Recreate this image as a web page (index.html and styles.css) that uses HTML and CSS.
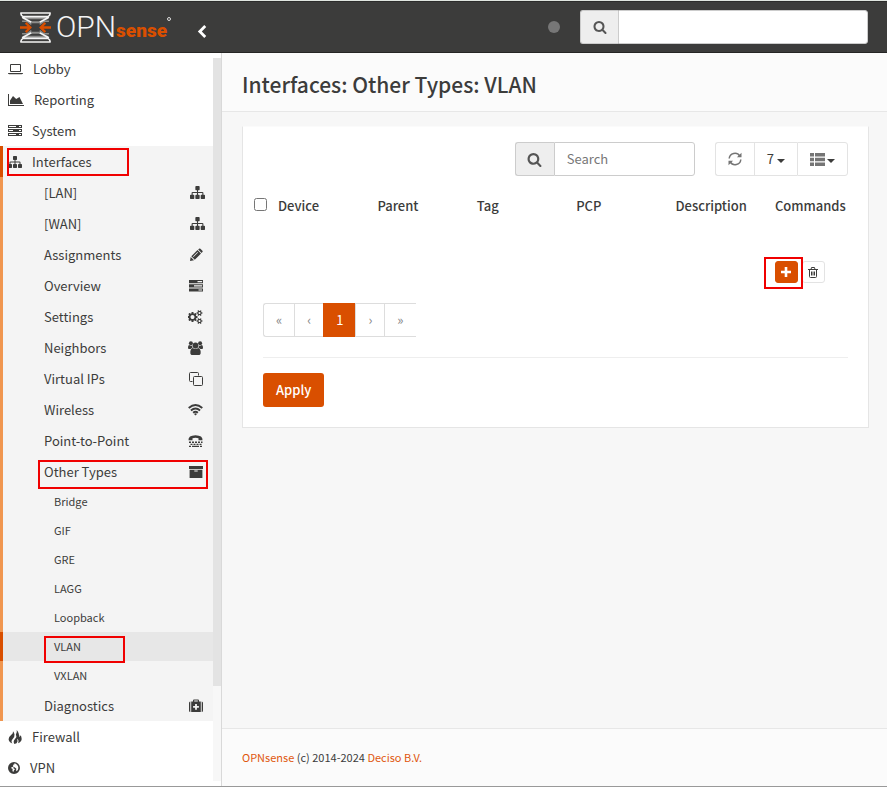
FILE: index.html
```html
<!DOCTYPE html>
<html lang="en">
<head>
<meta charset="utf-8">
<meta name="viewport" content="width=device-width, initial-scale=1">
<title>VLAN | Other Types | Interfaces</title>
<link rel="stylesheet" href="styles.css">
</head>
<body>
<svg class="defs" aria-hidden="true">
  <symbol id="i-sitemap" viewBox="0 0 1792 1792"><path d="M1792 1248v320q0 40-28 68t-68 28h-320q-40 0-68-28t-28-68v-320q0-40 28-68t68-28h96v-192h-512v192h96q40 0 68 28t28 68v320q0 40-28 68t-68 28h-320q-40 0-68-28t-28-68v-320q0-40 28-68t68-28h96v-192h-512v192h96q40 0 68 28t28 68v320q0 40-28 68t-68 28h-320q-40 0-68-28t-28-68v-320q0-40 28-68t68-28h96v-192q0-52 38-90t90-38h512v-192h-96q-40 0-68-28t-28-68v-320q0-40 28-68t68-28h320q40 0 68 28t28 68v320q0 40-28 68t-68 28h-96v192h512q52 0 90 38t38 90v192h96q40 0 68 28t28 68z"/></symbol>
  <symbol id="i-search" viewBox="0 0 1792 1792"><path d="M1216 832q0-185-131.5-316.5t-316.5-131.5-316.5 131.5-131.5 316.5 131.5 316.5 316.5 131.5 316.5-131.5 131.5-316.5zm512 832q0 52-38 90t-90 38q-54 0-90-38l-343-342q-179 124-399 124-143 0-273.5-55.5t-225-150-150-225-55.5-273.5 55.5-273.5 150-225 225-150 273.5-55.5 273.5 55.5 225 150 150 225 55.5 273.5q0 220-124 399l343 343q37 37 37 90z"/></symbol>
  <symbol id="i-pencil" viewBox="0 0 14 14"><path fill-rule="evenodd" d="M1 13l.7-4L5 12.300zM2.300 8.300l6.200-6.200 3.500 3.500-6.200 6.200zM4 8.500l.5.5 4.500-4.500-.5-.5zM9.200 1.500l.8-.8q.7-.6 1.400 0l2 2q.6.7 0 1.400l-.8.8z"/></symbol>
  <symbol id="i-archive" viewBox="0 0 14 14"><path fill-rule="evenodd" d="M0 1h14v3H0zM.6 4.800h12.800V13H.6zM5.300 5.600v1h3.400v-1z"/></symbol>
  <symbol id="i-cogs" viewBox="0 0 1920 1792"><path d="M832 896q0-106-75-181t-181-75-181 75-75 181 75 181 181 75 181-75 75-181zm768 512q0-52-38-90t-90-38-90 38-38 90q0 53 37.500 90.500t90.500 37.500 90.500-37.500 37.500-90.500zm0-1024q0-52-38-90t-90-38-90 38-38 90q0 53 37.500 90.500t90.500 37.500 90.500-37.500 37.500-90.500zm-384 421v185q0 10-7 19.500t-16 10.500l-155 24q-11 35-32 76 34 48 90 115 7 11 7 20 0 12-7 19-23 30-82.500 89.500t-78.500 59.500q-11 0-21-7l-115-90q-37 19-77 31-11 108-23 155-7 24-30 24h-186q-11 0-20-7.500t-10-17.500l-23-153q-34-10-75-31l-118 89q-7 7-20 7-11 0-21-8-144-133-144-160 0-9 7-19 10-14 41-53t47-61q-23-44-35-82l-152-24q-10-1-17-9.500t-7-19.500v-185q0-10 7-19.500t16-10.500l155-24q11-35 32-76-34-48-90-115-7-11-7-20 0-12 7-20 22-30 82-89t79-59q11 0 21 7l115 90q34-18 77-32 11-108 23-154 7-24 30-24h186q11 0 20 7.500t10 17.500l23 153q34 10 75 31l118-89q8-7 20-7 11 0 21 8 144 133 144 160 0 8-7 19-12 16-42 54t-45 60q23 48 34 82l152 23q10 2 17 10.500t7 19.500zm640 533v140q0 16-149 31-12 27-30 52 51 113 51 138 0 4-4 7-122 71-124 71-8 0-46-47t-52-68q-20 2-30 2t-30-2q-14 21-52 68t-46 47q-2 0-124-71-4-3-4-7 0-25 51-138-18-25-30-52-149-15-149-31v-140q0-16 149-31 13-29 30-52-51-113-51-138 0-4 4-7 4-2 35-20t59-34 30-16q8 0 46 46.500t52 67.500q20-2 30-2t30 2q51-71 92-112l6-2q4 0 124 70 4 3 4 7 0 25-51 138 17 23 30 52 149 15 149 31zm0-1024v140q0 16-149 31-12 27-30 52 51 113 51 138 0 4-4 7-122 71-124 71-8 0-46-47t-52-68q-20 2-30 2t-30-2q-14 21-52 68t-46 47q-2 0-124-71-4-3-4-7 0-25 51-138-18-25-30-52-149-15-149-31v-140q0-16 149-31 13-29 30-52-51-113-51-138 0-4 4-7 4-2 35-20t59-34 30-16q8 0 46 46.500t52 67.500q20-2 30-2t30 2q51-71 92-112l6-2q4 0 124 70 4 3 4 7 0 25-51 138 17 23 30 52 149 15 149 31z"/></symbol>
  <symbol id="i-laptop" viewBox="0 0 15 14"><path fill-rule="evenodd" d="M3 2h9q1 0 1 1v6q0 1-1 1H3q-1 0-1-1V3q0-1 1-1zM3 3v6h9V3zM0 11h15v.6q-.4.7-1.400.7H1.400Q.4 12.300 0 11.600z"/></symbol>
  <symbol id="i-area" viewBox="0 0 16 14"><path d="M0 1h1v11h15v1H0zM2 11V7.500L5 3l3.200 3L11.500 4l3.500 7z"/></symbol>
  <symbol id="i-server" viewBox="0 0 14 14"><path fill-rule="evenodd" d="M0 1h14v3H0zM0 5h14v3H0zM0 9h14v3H0zM1 2v1h7V2zM1 6v1h4V6zM1 10v1h7v-1zM11 2v1h2V2zM11 6v1h2V6zM11 10v1h2v-1z"/></symbol>
  <symbol id="i-tasks" viewBox="0 0 14 14"><path fill-rule="evenodd" d="M0 1h14v3.200H0zM0 5.200h14v3.200H0zM0 9.400h14v3.200H0zM8.500 2v1.200h4.600V2zM5 6.200v1.200h8.100V6.200zM9.500 10.400v1.200h3.600v-1.200z"/></symbol>
  <symbol id="i-users" viewBox="0 0 15 14"><circle cx="7.500" cy="4.500" r="2.900"/><circle cx="2.900" cy="2.300" r="2"/><circle cx="12.100" cy="2.300" r="2"/><path d="M3.500 14q-1.500-.4-1.200-3.200.4-3.400 2.400-3.800 2.800 1.700 5.600 0 2 .4 2.400 3.800.3 2.800-1.200 3.200zM.9 8.100Q0 8 0 6.500 0 4.200 1.200 4.100q1.500 1 3 .4-.2 1.300.4 2.300-1.400.3-2 1.300zM14.100 8.100q.9-.1.900-1.600 0-2.300-1.200-2.400-1.500 1-3 .4.200 1.300-.4 2.300 1.400.3 2 1.300z"/></symbol>
  <symbol id="i-clone" viewBox="0 0 14 14"><path fill="none" stroke="currentColor" d="M3.500 9.500h-2q-1 0-1-1v-7q0-1 1-1h7q1 0 1 1v2M5.500 4.500h7q1 0 1 1v7q0 1-1 1h-7q-1 0-1-1v-7q0-1 1-1z"/></symbol>
  <symbol id="i-wifi" viewBox="0 0 15 14"><path fill="none" stroke="currentColor" stroke-width="1.800" d="M.7 5q6.800-6 13.600 0M2.900 7.500q4.600-4 9.200 0M5.100 9.800q2.400-2.100 4.800 0"/><path d="M6 10.900q1.500-1.100 3 0l-1.500 1.600z"/></symbol>
  <symbol id="i-tty" viewBox="0 0 15 14"><path d="M.5 6.200Q0 1.400 7.500 1.200 15 1.400 14.500 6.200h-4V4.300q-3-1-6 0v1.900zM1 7.500h2V9H1zM4 7.500h2V9H4zM7 7.500h2V9H7zM10 7.500h2V9h-2zM13 7.500h1.500V9H13zM2.500 9.700h2V11h-2zM5.500 9.700h2V11h-2zM8.500 9.700h2V11h-2zM11.500 9.700h2V11h-2zM1 11.700h2V13H1zM4 11.700h7V13H4zM12 11.700h2V13h-2z"/></symbol>
  <symbol id="i-medkit" viewBox="0 0 14 14"><path fill-rule="evenodd" d="M1.300 2.500v10.500Q0 13 0 11.500V4q0-1.500 1.300-1.500zM12.700 2.500v10.500q1.300 0 1.300-1.500V4q0-1.500-1.300-1.500zM2.200 2.500H4V1.500q0-1 1-1h4q1 0 1 1v1h1.800V13H2.200zM5.200 1.600v.9h3.600v-.9zM6.100 5v2H4.100v1.800h2v2h1.800v-2h2V7h-2V5z"/></symbol>
  <symbol id="i-fire" viewBox="0 0 14 14"><path d="M5 1.200q.5 2-1.900 3.800Q.4 7.100.6 9.300.8 12.200 4.400 13.600 2.600 11 4.700 8.900q2.100-2.100 1.800-4.300Q6.200 2.600 5 1.200zM8.700 0q.7 2.600-.8 4.600 1.400 2.300-.9 4.500-2.300 2.400-.6 4.900 2.800-.2 3.100-2.600 0-1.500-.4-2.600 2.200 1.400 1 4.500 3.300-1.300 3.600-4.300.1-2.800-1.900-3.900.3 1.600-.8 2.100.4-4.500-2.300-7.200z"/></symbol>
  <symbol id="i-globe" viewBox="0 0 12 12"><path fill-rule="evenodd" d="M6 0a6 6 0 1 1 0 12A6 6 0 0 1 6 0zM7.300 1.400L6 1.600l.6.7-1 .3-.8 1 .8.300L4.600 5l-1.200.2-.3 1 1 .2.600 1-.3 1.500.9 1L6 8.300l.9-.9-.9-1-1-.5.6-.7 1.200.1.600.8.900.5-.2 1.700.6.900 1.200-1.400Q11.500 3.500 7.300 1.400z"/></symbol>
  <symbol id="i-refresh" viewBox="0 0 14 14"><path fill="none" stroke="currentColor" stroke-width="1.500" d="M1.200 6.500A5.700 5.700 0 0 1 11.800 4.100M12.800 7.500A5.700 5.700 0 0 1 2.200 9.900"/><path d="M13.500.7V5.300H8.900zM.5 13.300V8.700h4.600z"/></symbol>
  <symbol id="i-list" viewBox="0 0 15 13"><path d="M0 0h4v3.500H0zM5 0h10v3.500H5zM0 4.700h4v3.500H0zM5 4.700h10v3.500H5zM0 9.400h4v3.500H0zM5 9.400h10v3.500H5z"/></symbol>
  <symbol id="i-plus" viewBox="0 0 10 10"><path d="M3.700 0h2.600v3.700H10v2.600H6.300V10H3.700V6.300H0V3.700h3.700z"/></symbol>
  <symbol id="i-trash" viewBox="0 0 10 11"><path fill="none" stroke="currentColor" d="M0 2.500h10M3 2.500l.5-2h3l.5 2M1.500 2.500v7q0 1 1 1h5q1 0 1-1v-7M3.500 4.500v4M5 4.500v4M6.500 4.500v4"/></symbol>
  <symbol id="i-chevron" viewBox="0 0 9 12"><path fill="none" stroke="currentColor" stroke-width="2.600" d="M7.500 1L2.500 6l5 5"/></symbol>
</svg>

<header class="topbar">
  <a class="brand" href="#" aria-label="OPNsense">
    <svg class="brand-mark" viewBox="0 0 30 30">
      <path fill="#8d8d8b" d="M3 4.500h24V7H3zM3 23h24v2.500H3zM11 9h8v2h-8zM11 19h8v2h-8z"/>
      <path fill="none" stroke="#8d8d8b" stroke-width="1.500" d="M2 9h5l4 3M28 9h-5l-4 3M2 21h5l4-3M28 21h-5l-4-3"/>
      <path fill="none" stroke="#f4f4f4" stroke-width="1.600" d="M1 1h28q.5 2-2 3.500H3Q.5 3 1 1zM1 29h28q.5-2-2-3.500H3Q.5 27 1 29zM2 5l9 5M28 5l-9 5M2 25l9-5M28 25l-9-5"/>
      <path fill="none" stroke="#d94f00" stroke-width="2.200" d="M0 15h10M5.500 10.500L10 15l-4.500 4.500M30 15H20M24.500 10.500L20 15l4.500 4.500"/>
    </svg>
    <span class="brand-opn">OPN</span><span class="brand-sense">sense</span><span class="brand-dot"></span>
  </a>
  <button class="collapse" type="button" aria-label="Toggle sidebar"><svg width="10" height="13"><use href="#i-chevron"/></svg></button>
  <span class="status"></span>
  <form class="group top-search">
    <label class="addon" for="q"><svg width="14" height="14"><use href="#i-search"/></svg></label>
    <input id="q" type="text" aria-label="Quick search">
  </form>
</header>

<div class="page">
  <aside class="sidebar">
    <nav class="menu">
      <a class="item" href="#"><svg width="15" height="14"><use href="#i-laptop"/></svg>Lobby</a>
      <a class="item" href="#"><svg width="16" height="14"><use href="#i-area"/></svg>Reporting</a>
      <a class="item" href="#"><svg width="14" height="14"><use href="#i-server"/></svg>System</a>
      <a class="item open" href="#"><svg width="14" height="14"><use href="#i-sitemap"/></svg>Interfaces<span class="mark mark-main"></span></a>
      <div class="submenu">
        <a class="sub" href="#">[LAN]<svg class="wide" width="15" height="15"><use href="#i-sitemap"/></svg></a>
        <a class="sub" href="#">[WAN]<svg class="wide" width="15" height="15"><use href="#i-sitemap"/></svg></a>
        <a class="sub" href="#">Assignments<svg width="14" height="14"><use href="#i-pencil"/></svg></a>
        <a class="sub" href="#">Overview<svg width="14" height="14"><use href="#i-tasks"/></svg></a>
        <a class="sub" href="#">Settings<svg width="15" height="14"><use href="#i-cogs"/></svg></a>
        <a class="sub" href="#">Neighbors<svg width="15" height="14"><use href="#i-users"/></svg></a>
        <a class="sub" href="#">Virtual IPs<svg width="14" height="14"><use href="#i-clone"/></svg></a>
        <a class="sub" href="#">Wireless<svg width="15" height="14"><use href="#i-wifi"/></svg></a>
        <a class="sub" href="#">Point-to-Point<svg width="15" height="14"><use href="#i-tty"/></svg></a>
        <a class="sub" href="#">Other Types<svg width="14" height="14"><use href="#i-archive"/></svg><span class="mark mark-sub"></span></a>
        <a class="leaf" href="#">Bridge</a>
        <a class="leaf" href="#">GIF</a>
        <a class="leaf" href="#">GRE</a>
        <a class="leaf" href="#">LAGG</a>
        <a class="leaf" href="#">Loopback</a>
        <a class="leaf active" href="#">VLAN<span class="mark mark-leaf"></span></a>
        <a class="leaf" href="#">VXLAN</a>
        <a class="sub" href="#">Diagnostics<svg width="14" height="14"><use href="#i-medkit"/></svg></a>
      </div>
      <a class="item" href="#"><svg width="14" height="14"><use href="#i-fire"/></svg>Firewall</a>
      <a class="item" href="#"><svg width="12" height="12"><use href="#i-globe"/></svg>VPN</a>
    </nav>
    <div class="track"><div class="thumb"></div></div>
  </aside>

  <div class="content">
    <div class="title"><h1>Interfaces: Other Types: VLAN</h1></div>
    <main class="main">
      <section class="panel">
        <div class="toolbar">
          <div class="group table-search">
            <label class="addon" for="s"><svg width="15" height="15"><use href="#i-search"/></svg></label>
            <input id="s" type="text" placeholder="Search">
          </div>
          <div class="buttons">
            <button type="button" aria-label="Refresh"><svg width="14" height="14"><use href="#i-refresh"/></svg></button>
            <button type="button">7<span class="caret"></span></button>
            <button type="button" aria-label="Columns"><svg width="15" height="13"><use href="#i-list"/></svg><span class="caret"></span></button>
          </div>
        </div>
        <table>
          <colgroup><col class="c-check"><col class="c"><col class="c"><col class="c"><col class="c"><col class="c"><col></colgroup>
          <thead>
            <tr><th class="check"><input type="checkbox" aria-label="Select all"></th><th>Device</th><th>Parent</th><th>Tag</th><th>PCP</th><th>Description</th><th>Commands</th></tr>
          </thead>
          <tfoot>
            <tr><td colspan="6"></td><td><div class="commands">
              <button class="add" type="button" aria-label="Add"><svg width="10" height="10"><use href="#i-plus"/></svg></button>
              <button class="del" type="button" aria-label="Delete selected"><svg width="10" height="11"><use href="#i-trash"/></svg></button>
              <span class="mark mark-add"></span>
            </div></td></tr>
          </tfoot>
        </table>
        <div class="below">
          <div class="pages">
            <a href="#">«</a><a href="#">‹</a><a class="current" href="#">1</a><a href="#">›</a><a href="#">»</a>
          </div>
          <hr>
          <button class="apply" type="button">Apply</button>
        </div>
      </section>
    </main>
    <footer class="foot"><a href="#">OPNsense</a> (c) 2014-2024 <a href="#">Deciso B.V.</a></footer>
  </div>
</div>
</body>
</html>
```
FILE: styles.css
```css
* { box-sizing: border-box; }

body {
  margin: 0;
  min-height: 100vh;
  display: flex;
  flex-direction: column;
  border-top: 1px solid #e0e5e0;
  border-bottom: 1px solid #999;
  background: #f7f7f7;
  color: #3c3c3b;
  font: 13px/20px "Noto Sans CJK SC", "Noto Sans", sans-serif;
}

a { color: inherit; text-decoration: none; }
svg { display: block; flex: none; fill: currentColor; }
.defs { position: absolute; width: 0; height: 0; }
button, input { font: inherit; color: inherit; }

/* Top bar */
.topbar {
  display: flex;
  align-items: center;
  height: 52px;
  padding: 0 19px 0 20px;
  background: #3c3c3b;
  border-top: 1px solid #2c2c2b;
  border-bottom: 1px solid #252524;
}
.brand { display: flex; align-items: center; height: 30px; width: 152px; }
.brand-mark { width: 31px; height: 31px; }
.brand-opn {
  margin-left: 5px;
  color: #f4f4f4;
  font: 300 30px/30px Roboto, "Liberation Sans", sans-serif;
}
.brand-sense {
  padding-top: 8px;
  color: #d94f00;
  font: 900 19px/30px Roboto, "Liberation Sans", sans-serif;
}
.brand-dot { width: 4px; height: 4px; margin-bottom: 16px; border: 1px solid #ddd; border-radius: 50%; }
.collapse { margin: 8px 0 0 25px; padding: 0; border: 0; background: none; color: #fff; }
.status { width: 12px; height: 12px; margin: 0 20px 0 auto; border-radius: 50%; background: #777; }

.group { display: flex; height: 34px; margin: 0; }
.addon {
  display: flex;
  align-items: center;
  justify-content: center;
  width: 39px;
  background: #eee;
  border: 1px solid #ccc;
  border-right: 0;
  border-radius: 3px 0 0 3px;
  color: #555;
}
.group input {
  flex: 1;
  min-width: 0;
  padding: 0 12px;
  border: 1px solid #ccc;
  border-radius: 0 3px 3px 0;
  background: #fff;
  outline: 0;
}
.group input::placeholder { color: #777; opacity: 1; }
.top-search { width: 288px; }
.top-search .addon { width: 38px; }

/* Sidebar */
.page { flex: 1; display: flex; }
.sidebar {
  display: flex;
  flex: none;
  width: 222px;
  background: #fff;
  border-right: 1px solid #d9d9d9;
}
.menu { flex: 1; }
.track { width: 8px; margin-bottom: 5px; background: #f7f7f7; }
.thumb { height: 87%; border-top: 5px solid #fff; background: #e3e3e3; }
.item, .sub, .leaf { position: relative; display: flex; align-items: center; }
.item { gap: 10px; height: 31px; padding-left: 8px; }
.item.open { background: #f4f4f4; box-shadow: inset 3px 0 #d94f00; }
.submenu { background: #f4f4f4; border-left: 3px solid #f0964f; }
.sub { justify-content: space-between; height: 31px; padding: 0 10px 0 41px; }
.sub .wide { margin-right: -2px; }
.leaf { height: 29px; padding: 0 0 2px 51px; font-size: 11px; }
.leaf.active { margin-left: -3px; padding-left: 54px; background: #e7e7e7; box-shadow: inset 3px 0 #d94f00; }

/* Highlight frames laid over the controls */
.mark { position: absolute; border: 2px solid #f00000; pointer-events: none; }
.mark-main { left: 7px; top: 2px; width: 122px; height: 28px; }
.mark-sub { left: 35px; right: 5px; top: 4px; height: 29px; }
.mark-leaf { left: 44px; top: 4px; width: 81px; height: 27px; }
.mark-add { left: -11px; top: -4px; width: 39px; height: 32px; }

/* Content */
.content { flex: 1; min-width: 0; display: flex; flex-direction: column; }
.title { padding: 19px 20px 15px; background: #fbfbfb; border-bottom: 1px solid #e7e7e7; }
h1 { margin: 0; font-size: 21px; line-height: 24px; font-weight: 500; }
.main { flex: 1; padding: 14px 18px 20px 20px; }
.panel { padding: 15px 0 20px; background: #fff; border: 1px solid #e5e5e5; border-top-color: #fbfbfb; }
.toolbar { display: flex; justify-content: flex-end; gap: 20px; padding-right: 20px; }
.table-search { width: 180px; }
.buttons { display: flex; height: 34px; }
.buttons button {
  display: flex;
  align-items: center;
  gap: 3px;
  padding: 0 12px;
  border: 1px solid #e3e3e3;
  border-right-width: 0;
  background: #fff;
}
.buttons button:first-child { border-radius: 3px 0 0 3px; }
.buttons button:last-child { gap: 2px; border-right-width: 1px; border-radius: 0 3px 3px 0; }
.buttons svg { color: #757575; }
.caret { border: 4px solid transparent; border-top-color: #3c3c3b; border-bottom: 0; margin-top: 3px; }

table { width: 100%; margin-top: 15px; border-collapse: collapse; table-layout: fixed; }
.c-check { width: 25px; }
.c { width: 15.9%; }
th { height: 30px; padding: 0 0 0 10px; text-align: left; font-weight: 500; white-space: nowrap; }
.check { padding-left: 11px; }
.check input { display: block; width: 13px; height: 13px; margin: 0 0 4px; }
td { padding: 40px 0 20px 10px; }
.commands { position: relative; display: flex; gap: 4px; }
.commands button {
  display: flex;
  align-items: center;
  justify-content: center;
  width: 23px;
  height: 22px;
  padding: 0;
  border: 1px solid #e3e3e3;
  border-radius: 3px;
  background: #fff;
}
.commands .add { border-color: #d94f00; background: #d94f00; color: #fff; }

.below { padding: 0 20px; }
.pages { display: flex; height: 34px; }
.pages a {
  display: flex;
  align-items: center;
  padding: 0 12px;
  border: 1px solid #ddd;
  border-right: 0;
  color: #888;
}
.pages a:first-child { border-radius: 3px 0 0 3px; }
.pages .current { border-color: #d94f00; background: #d94f00; color: #fff; }
hr { margin: 20px 0 15px; border: 0; border-top: 1px solid #eee; }
.apply {
  height: 34px;
  padding: 0 13px;
  border: 0;
  border-radius: 3px;
  background: #d94f00;
  color: #fff;
  font-weight: 500;
}

.foot { padding: 18px 20px 19px; background: #fbfbfb; border-top: 1px solid #e7e7e7; font-size: 11px; }
.foot a { color: #e0570e; }
```
